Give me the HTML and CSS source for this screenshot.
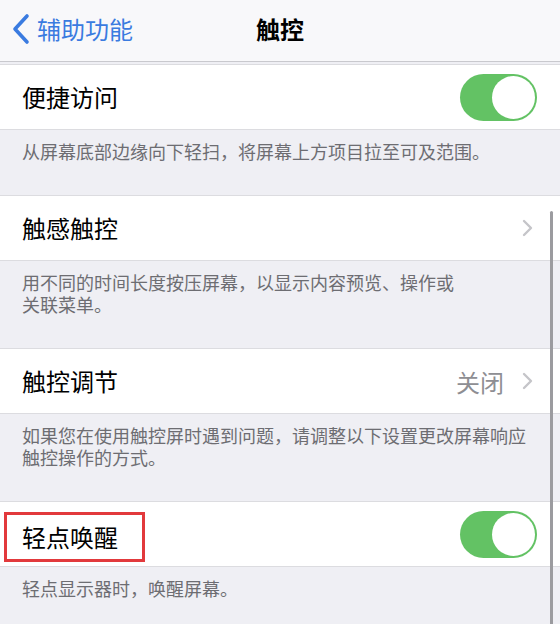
FILE: index.html
```html
<!DOCTYPE html>
<html lang="zh-CN">
<head>
  <meta charset="UTF-8">
  <title>触控</title>
  <link rel="stylesheet" href="styles.css">
</head>
<body>
  <!-- Nav bar -->
  <div class="navbar">
    <div class="back">
      <svg class="back-icon" width="20" height="32" viewBox="0 0 20 32">
        <path d="M16 3 L4 16 L16 29" fill="none" stroke="#3a7be0" stroke-width="3.6" stroke-linecap="round" stroke-linejoin="round"/>
      </svg>
      <span>辅助功能</span>
    </div>
    <div class="title">触控</div>
  </div>

  <div class="content">
    <div class="cell first">
      <span class="label">便捷访问</span>
      <span class="switch"><span class="knob"></span></span>
    </div>
    <div class="footer">从屏幕底部边缘向下轻扫，将屏幕上方项目拉至可及范围。</div>

    <div class="cell">
      <span class="label">触感触控</span>
      <span class="detail">
        <svg class="chevron" width="12" height="18" viewBox="0 0 12 18"><path d="M2 2 L9 9 L2 16" fill="none" stroke="#c5c5c9" stroke-width="2.4" stroke-linecap="round" stroke-linejoin="round"/></svg>
      </span>
    </div>
    <div class="footer">
      <div class="line">用不同的时间长度按压屏幕，以显示内容预览、操作或</div>
      <div class="line">关联菜单。</div>
    </div>

    <div class="cell">
      <span class="label">触控调节</span>
      <span class="detail">
        <span class="value">关闭</span>
        <svg class="chevron" width="12" height="18" viewBox="0 0 12 18"><path d="M2 2 L9 9 L2 16" fill="none" stroke="#c5c5c9" stroke-width="2.4" stroke-linecap="round" stroke-linejoin="round"/></svg>
      </span>
    </div>
    <div class="footer">
      <div class="line">如果您在使用触控屏时遇到问题，请调整以下设置更改屏幕响应</div>
      <div class="line">触控操作的方式。</div>
    </div>

    <div class="cell">
      <span class="label highlighted">轻点唤醒</span>
      <span class="switch"><span class="knob"></span></span>
    </div>
    <div class="footer">轻点显示器时，唤醒屏幕。</div>

    <div class="scrollbar"></div>
  </div>
</body>
</html>
```

FILE: styles.css
```css
body {
  margin: 0;
  background-color: #efeff4;
  font-family: "Noto Sans CJK SC", "Noto Sans", sans-serif;
  color: #000;
  width: 560px;
  height: 624px;
  overflow: hidden;
}

/* Nav bar */
.navbar {
  height: 61px;
  background-color: #f8f8fa;
  border-bottom: 1px solid #c9c9ce;
  display: flex;
  align-items: center;
  justify-content: center;
  position: relative;
}
.back {
  position: absolute;
  left: 11px;
  top: 13px;
  display: flex;
  align-items: center;
  color: #3a7be0;
  font-size: 24px;
  line-height: 32px;
}
.back-icon {
  margin-right: 6px;
}
.title {
  font-size: 24px;
  font-weight: 600;
  line-height: 32px;
  margin-top: -4px;
}

/* Cells */
.content {
  position: relative;
  padding-top: 2px;
}
.cell {
  height: 64px;
  background-color: #fff;
  border-top: 1px solid #dcdce0;
  border-bottom: 1px solid #dcdce0;
  display: flex;
  align-items: center;
  justify-content: space-between;
  padding: 0 22px;
}
.label {
  font-size: 24px;
  line-height: 32px;
}
.label.highlighted {
  outline: 3px solid #e2393c;
  padding: 6px 24px 6px 15px;
  margin-left: -15px;
  margin-top: 5px;
}

.switch {
  width: 77px;
  height: 47px;
  border-radius: 24px;
  background-color: #63c264;
  display: flex;
  align-items: center;
  justify-content: flex-end;
  padding-right: 2px;
  box-sizing: border-box;
  margin-right: 1px;
}
.knob {
  width: 43px;
  height: 43px;
  border-radius: 50%;
  background-color: #fff;
}

.detail {
  display: flex;
  align-items: center;
  margin-right: 4px;
}
.value {
  font-size: 24px;
  color: #8e8e93;
  margin-right: 18px;
}

.footer {
  padding: 10px 22px 33px;
  font-size: 18px;
  line-height: 22px;
  color: #6d6d72;
  white-space: nowrap;
}
.footer .line {
  height: 22px;
}

.scrollbar {
  position: absolute;
  left: 550px;
  top: 149px;
  width: 3px;
  height: 480px;
  border-radius: 2px;
  background-color: #9b9b9f;
}
```
